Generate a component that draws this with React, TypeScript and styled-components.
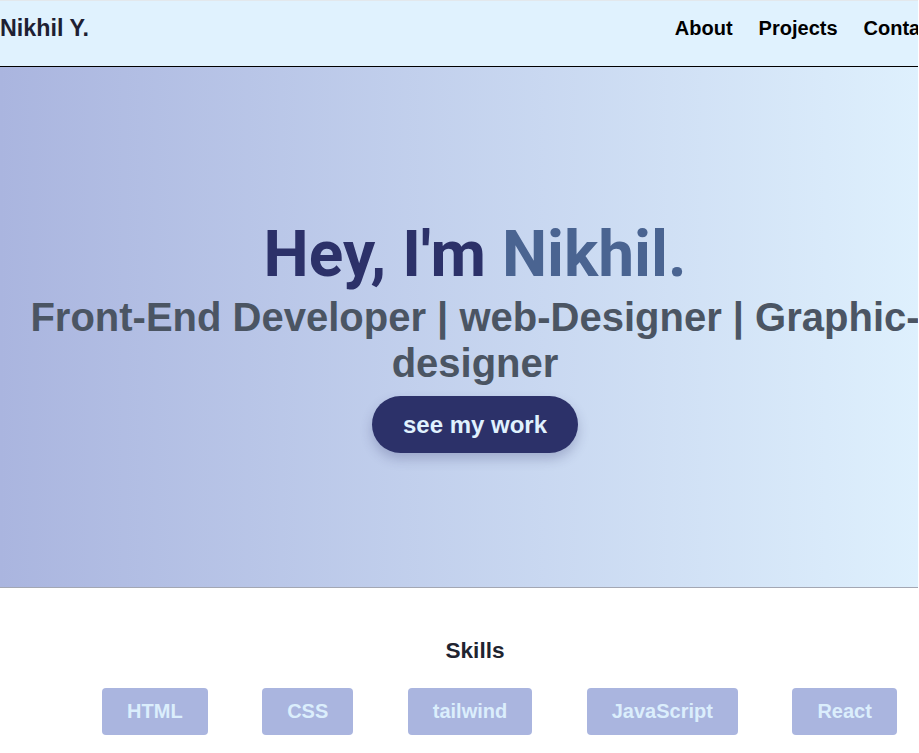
import React from "react";
import styled, { createGlobalStyle } from "styled-components";

const Global = createGlobalStyle`
  html, body { margin: 0; padding: 0; overflow: hidden; background: #ffffff; }
  body { font-family: "Liberation Sans", Arial, sans-serif; }
  * { box-sizing: border-box; }
`;

const Viewport = styled.div`
  width: 918px;
  overflow: hidden;
`;

const Page = styled.div`
  width: 950px;
`;

const Header = styled.header`
  height: 67px;
  background: #e0f2fe;
  border-top: 1px solid #e3e8ec;
  border-bottom: 1px solid #000000;
  display: flex;
  justify-content: space-between;
  align-items: flex-start;
  padding: 14px 12px 0 0;
`;

const Brand = styled.div`
  font-size: 23.3px;
  font-weight: 700;
  color: #1e1f33;
`;

const Nav = styled.nav`
  display: flex;
  gap: 26px;
  padding-top: 2px;
`;

const NavLink = styled.a`
  font-size: 20px;
  font-weight: 700;
  color: #000000;
  text-decoration: none;
`;

const Hero = styled.section`
  height: 521px;
  background: linear-gradient(90deg, #aab5df 0%, #e0f2fe 100%);
  border-bottom: 1px solid #a3a7b3;
  display: flex;
  flex-direction: column;
  align-items: center;
  padding-top: 150px;
  text-align: center;
`;

const Title = styled.h1`
  margin: 0;
  font-family: Roboto, "Liberation Sans", sans-serif;
  font-size: 64px;
  font-weight: 700;
  line-height: 1.2;
  color: #2c3169;
`;

const Accent = styled.span`
  color: #4a6491;
`;

const Subtitle = styled.h2`
  margin: 0;
  font-size: 40px;
  font-weight: 700;
  line-height: 46px;
  color: #4b5563;
`;

const CTA = styled.button`
  margin-top: 10px;
  border: none;
  border-radius: 999px;
  background: #2c3169;
  color: #e0f2fe;
  font-family: "Liberation Sans", Arial, sans-serif;
  font-size: 24px;
  font-weight: 700;
  line-height: 27px;
  padding: 15px 31px;
  box-shadow: 0 6px 12px rgba(44, 49, 105, 0.25);
  cursor: pointer;
`;

const Skills = styled.section`
  padding-top: 50px;
  text-align: center;
`;

const SkillsTitle = styled.h3`
  margin: 0;
  font-size: 22.6px;
  font-weight: 700;
  color: #1f2430;
`;

const ChipRow = styled.div`
  display: flex;
  justify-content: center;
  gap: 54.5px;
  padding-left: 49px;
  margin-top: 24px;
`;

const Chip = styled.div`
  background: #aab5df;
  color: #dbeefc;
  font-size: 20px;
  font-weight: 700;
  line-height: 23px;
  padding: 12px 25px;
  border-radius: 4px;
`;

const skills = ["HTML", "CSS", "tailwind", "JavaScript", "React"];

export default function App() {
  return (
    <>
      <Global />
      <Viewport>
        <Page>
          <Header>
            <Brand>Nikhil Y.</Brand>
            <Nav>
              <NavLink href="#about">About</NavLink>
              <NavLink href="#projects">Projects</NavLink>
              <NavLink href="#contact">Contact</NavLink>
            </Nav>
          </Header>
          <Hero>
            <Title>
              Hey, I'm <Accent>Nikhil.</Accent>
            </Title>
            <Subtitle>Front-End Developer | web-Designer | Graphic-designer</Subtitle>
            <CTA>see my work</CTA>
          </Hero>
          <Skills>
            <SkillsTitle>Skills</SkillsTitle>
            <ChipRow>
              {skills.map((s) => (
                <Chip key={s}>{s}</Chip>
              ))}
            </ChipRow>
          </Skills>
        </Page>
      </Viewport>
    </>
  );
}
